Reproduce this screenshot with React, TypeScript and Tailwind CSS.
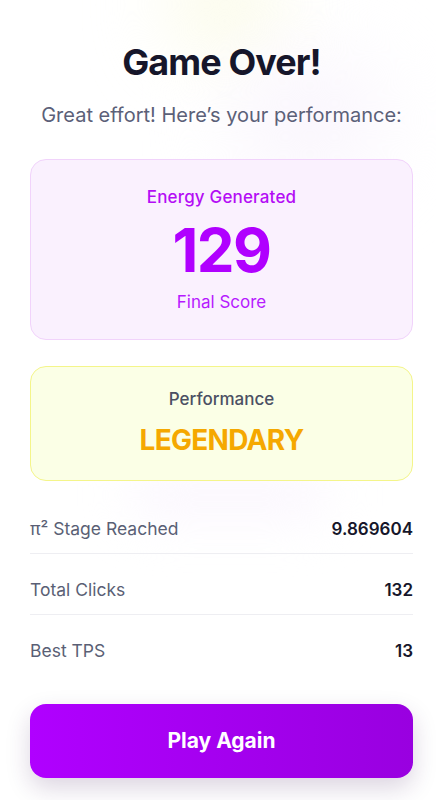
import React from "react";

type Stat = { label: string; value: string };

const stats: Stat[] = [
  { label: "π² Stage Reached", value: "9.869604" },
  { label: "Total Clicks", value: "132" },
  { label: "Best TPS", value: "13" },
];

export default function App() {
  return (
    <div
      className="relative h-[800px] w-full overflow-hidden bg-white"
      style={{ fontFamily: "Inter, 'Noto Sans', sans-serif" }}
    >
      {/* faint background glows */}
      <div className="pointer-events-none absolute left-[170px] top-[-40px] h-[90px] w-[110px] rounded-full bg-[#fbfbe6] blur-2xl" />
      <div className="pointer-events-none absolute left-[230px] top-[60px] h-[120px] w-[160px] rounded-full bg-[#faf6fd] blur-2xl" />
      <div className="pointer-events-none absolute left-[130px] top-[470px] h-[50px] w-[200px] rounded-full bg-[#fbf7fe] blur-xl" />

      <div className="relative flex flex-col pl-[30px] pr-[23px] pt-[42px]">
        <h1 className="text-center text-4xl font-bold tracking-tight text-[#16162a]">
          Game Over!
        </h1>
        <p className="mt-[19px] text-center text-[20px] leading-7 text-[#5b6078]">
          Great effort! Here’s your performance:
        </p>

        <div className="mt-[30px] flex flex-col items-center rounded-2xl border border-[#f1d3fb] bg-[#faf1fe] pb-[25px] pt-[25px]">
          <div className="text-[17px] font-medium leading-6 tracking-[0.01em] text-[#b40df5]">
            Energy Generated
          </div>
          <div className="mt-[11px] text-6xl font-bold leading-[60px] tracking-tight text-[#b000ff]">
            129
          </div>
          <div className="mt-[10px] text-[17px] leading-6 text-[#b61aff]">
            Final Score
          </div>
        </div>

        <div className="mt-[26px] flex flex-col items-center rounded-2xl border border-[#f4f58a] bg-[#fbffe6] pb-[22px] pt-[20px]">
          <div className="text-[17px] font-medium leading-6 text-[#4b5063]">
            Performance
          </div>
          <div className="mt-[11px] text-[28px] font-bold leading-9 tracking-tight text-[#f5a800]">
            LEGENDARY
          </div>
        </div>

        <div className="mt-6 flex flex-col gap-3">
          {stats.map((s, i) => (
            <div
              key={s.label}
              className={
                i < stats.length - 1
                  ? "flex items-center justify-between border-b border-[#eeeef2] py-3"
                  : "flex items-center justify-between py-3"
              }
            >
              <span className="text-[17.5px] leading-6 text-[#5a5f75]">{s.label}</span>
              <span className="text-[17px] font-semibold leading-6 text-[#16162a]">{s.value}</span>
            </div>
          ))}
        </div>

        <button
          type="button"
          className="mt-[29px] flex h-[74px] w-full items-center justify-center rounded-2xl bg-gradient-to-r from-[#b000ff] to-[#9900e0] text-[21px] font-bold text-white shadow-[0_10px_24px_rgba(60,20,90,0.18)]"
        >
          Play Again
        </button>
      </div>
    </div>
  );
}
